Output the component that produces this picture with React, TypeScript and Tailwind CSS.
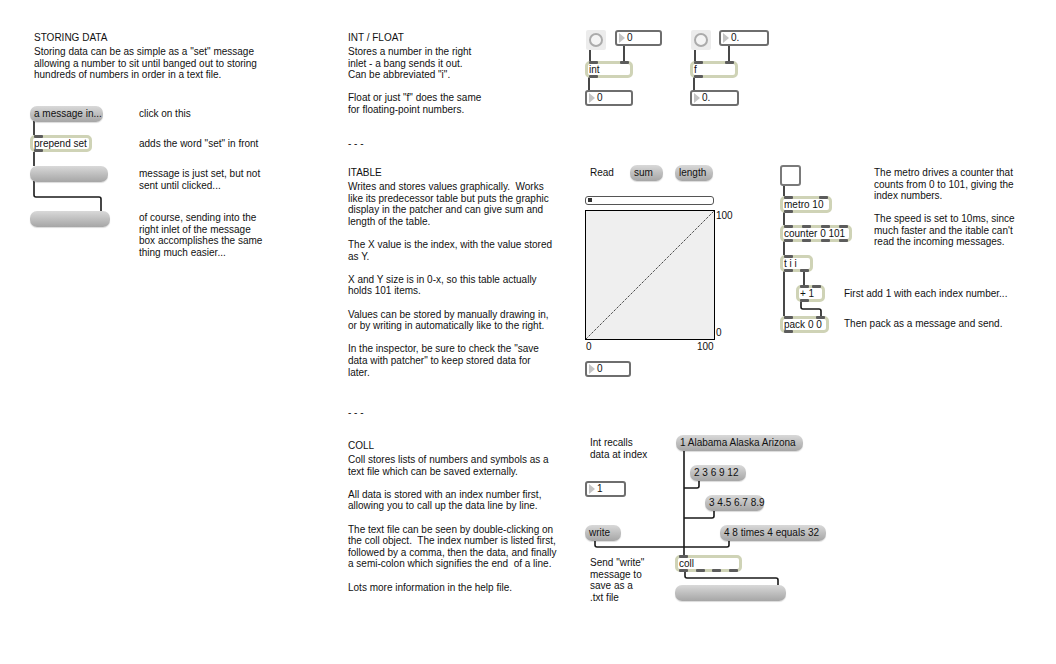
import React from "react";

type Box = { className: string; text?: string };

function Comment({ className, text }: Box) {
  return (
    <div className={`absolute whitespace-pre text-[10px] leading-[11.6px] text-[#111] ${className}`}>
      {text}
    </div>
  );
}

function Ports({ n, side }: { n: number; side: "top" | "bottom" }) {
  const pos = side === "top" ? "-top-[3px]" : "-bottom-[3px]";
  return (
    <div className={`absolute left-[1px] right-[1px] flex ${pos} ${n > 1 ? "justify-between" : "justify-start"}`}>
      {Array.from({ length: n }).map((_, i) => (
        <div key={i} className="h-[3px] w-[9px] rounded-[1px] bg-[#5c5c5c]" />
      ))}
    </div>
  );
}

function Obj({ className, text, ins, outs }: Box & { ins: number; outs: number }) {
  return (
    <div className={`absolute flex h-[17px] items-center rounded-[5px] border-[3px] border-[#cfd3b6] bg-white ${className}`}>
      <Ports n={ins} side="top" />
      <Ports n={outs} side="bottom" />
      <span className="whitespace-pre pl-[1px] text-[10px] leading-[11px] text-[#111]">{text}</span>
    </div>
  );
}

function Msg({ className, text }: Box) {
  return (
    <div
      className={`absolute flex h-[16px] items-center rounded-[7px] bg-gradient-to-b from-[#d9d9d9] via-[#bfbfbf] to-[#a6a6a6] pl-[4px] text-[10px] text-[#111] shadow-[0_1px_1px_rgba(0,0,0,0.15)] ${className}`}
    >
      <span className="whitespace-pre leading-[12px]">{text}</span>
    </div>
  );
}

function Num({ className, text }: Box) {
  return (
    <div className={`absolute flex h-[16px] items-center rounded-[3px] border-2 border-[#6e6e6e] bg-white ${className}`}>
      <span className="ml-[2px] h-0 w-0 border-y-[5px] border-l-[6px] border-y-transparent border-l-[#c4c4c4]" />
      <span className="ml-[2px] text-[10px] leading-[12px] text-[#111]">{text}</span>
    </div>
  );
}

function Bang({ className }: { className: string }) {
  return (
    <div className={`absolute flex h-[20px] w-[20px] items-center justify-center rounded-[2px] bg-[#ececec] ${className}`}>
      <div className="h-[14px] w-[14px] rounded-full border-2 border-[#ababab] bg-[#f4f4f4]" />
    </div>
  );
}

export default function App() {
  return (
    <div className="relative h-[664px] w-[1056px] overflow-hidden bg-white font-['Liberation_Sans',Arial,sans-serif]">
      {/* patch cords */}
      <svg className="absolute left-0 top-0" width="1056" height="664">
        <g fill="none" stroke="#1a1a1a" strokeWidth="1.6">
          <path d="M34 121 V135" />
          <path d="M34 152 V166" />
          <path d="M34 181 V195 Q34 197 36 197 H99 Q101 197 101 199 V211" />

          <path d="M590 50 V61" />
          <path d="M624 44 V61" />
          <path d="M589 77 V90" />
          <path d="M695 50 V61" />
          <path d="M729 44 V61" />
          <path d="M694 77 V90" />

          <path d="M784 186 V196" />
          <path d="M784 211 V225" />
          <path d="M784 241 V255" />
          <path d="M784 270 V316" />
          <path d="M804 270 V285" />
          <path d="M801 300 V307 Q801 309 803 309 H819 Q821 309 821 311 V316" />

          <path d="M684 451 V555" />
          <path d="M699 480 V486 Q699 488 697 488 H684" />
          <path d="M714 510 V516 Q714 518 712 518 H684" />
          <path d="M595 540 V545 Q595 547 597 547 H684" />
          <path d="M729 540 V545 Q729 547 727 547 H684" />
          <path d="M685 572 V576 Q685 578 687 578 H776 Q778 578 778 580 V585" />
        </g>
      </svg>

      {/* STORING DATA */}
      <Comment className="left-[34px] top-[32px]" text="STORING DATA" />
      <Comment
        className="left-[34px] top-[46px] text-[10.4px]"
        text={'Storing data can be as simple as a "set" message\nallowing a number to sit until banged out to storing\nhundreds of numbers in order in a text file.'}
      />
      <Msg className="left-[30px] top-[106px] w-[73px]" text="a message in..." />
      <Comment className="left-[139px] top-[108px]" text="click on this" />
      <Obj className="left-[30px] top-[135px] w-[62px]" text="prepend set" ins={1} outs={1} />
      <Comment className="left-[139px] top-[138px]" text={'adds the word "set" in front'} />
      <Msg className="left-[30px] top-[166px] w-[78px]" />
      <Comment className="left-[139px] top-[168px]" text={"message is just set, but not\nsent until clicked..."} />
      <Msg className="left-[30px] top-[211px] w-[80px]" />
      <Comment
        className="left-[139px] top-[212px]"
        text={"of course, sending into the\nright inlet of the message\nbox accomplishes the same\nthing much easier..."}
      />

      {/* INT / FLOAT */}
      <Comment className="left-[348px] top-[32px]" text="INT / FLOAT" />
      <Comment
        className="left-[348px] top-[46px]"
        text={'Stores a number in the right\ninlet - a bang sends it out.\nCan be abbreviated "i".\n\nFloat or just "f" does the same\nfor floating-point numbers.'}
      />
      <Comment className="left-[348px] top-[138px]" text="- - -" />

      <Bang className="left-[586px] top-[30px]" />
      <Num className="left-[615px] top-[30px] w-[47px]" text="0" />
      <Obj className="left-[585px] top-[61px] w-[48px]" text="int" ins={2} outs={1} />
      <Num className="left-[585px] top-[90px] w-[48px]" text="0" />

      <Bang className="left-[691px] top-[30px]" />
      <Num className="left-[719px] top-[30px] w-[50px]" text="0." />
      <Obj className="left-[690px] top-[61px] w-[48px]" text="f" ins={2} outs={1} />
      <Num className="left-[690px] top-[90px] w-[49px]" text="0." />

      {/* ITABLE */}
      <Comment className="left-[348px] top-[167px]" text="ITABLE" />
      <Comment
        className="left-[348px] top-[181px]"
        text={
          "Writes and stores values graphically.  Works\nlike its predecessor table but puts the graphic\ndisplay in the patcher and can give sum and\nlength of the table.\n\nThe X value is the index, with the value stored\nas Y.\n\nX and Y size is in 0-x, so this table actually\nholds 101 items.\n\nValues can be stored by manually drawing in,\nor by writing in automatically like to the right.\n\nIn the inspector, be sure to check the \"save\ndata with patcher\" to keep stored data for\nlater."
        }
      />
      <Comment className="left-[348px] top-[407px]" text="- - -" />

      <Comment className="left-[590px] top-[167px]" text="Read" />
      <Msg className="left-[630px] top-[165px] w-[33px]" text="sum" />
      <Msg className="left-[675px] top-[165px] w-[38px]" text="length" />
      <div className="absolute left-[585px] top-[196px] h-[9px] w-[129px] rounded-[3px] border-[1.5px] border-[#555] bg-white">
        <div className="ml-[2px] mt-[1px] h-[4px] w-[4px] bg-[#333]" />
      </div>
      <div className="absolute left-[585px] top-[210px] h-[130px] w-[130px] border border-black bg-[#efefef]">
        <svg className="absolute left-0 top-0" width="128" height="128">
          <line x1="0" y1="128" x2="128" y2="0" stroke="#000" strokeWidth="1" strokeDasharray="1 1.2" />
        </svg>
      </div>
      <Comment className="left-[716px] top-[210px]" text="100" />
      <Comment className="left-[716px] top-[327px]" text="0" />
      <Comment className="left-[586px] top-[341px]" text="0" />
      <Comment className="left-[697px] top-[341px]" text="100" />
      <Num className="left-[585px] top-[361px] w-[46px]" text="0" />

      {/* metro / counter */}
      <div className="absolute left-[780px] top-[165px] h-[21px] w-[21px] rounded-[3px] border-2 border-[#7a7a7a] bg-white" />
      <Obj className="left-[780px] top-[196px] w-[52px]" text="metro 10" ins={2} outs={1} />
      <Obj className="left-[780px] top-[225px] w-[72px]" text="counter 0 101" ins={4} outs={4} />
      <Obj className="left-[780px] top-[255px] w-[33px]" text="t i i" ins={1} outs={2} />
      <Obj className="left-[796px] top-[285px] w-[29px]" text="+ 1" ins={2} outs={1} />
      <Obj className="left-[780px] top-[316px] w-[49px]" text="pack 0 0" ins={2} outs={1} />
      <Comment
        className="left-[874px] top-[167px]"
        text={"The metro drives a counter that\ncounts from 0 to 101, giving the\nindex numbers."}
      />
      <Comment
        className="left-[874px] top-[213px]"
        text={"The speed is set to 10ms, since\nmuch faster and the itable can't\nread the incoming messages."}
      />
      <Comment className="left-[844px] top-[288px]" text="First add 1 with each index number..." />
      <Comment className="left-[844px] top-[318px]" text="Then pack as a message and send." />

      {/* COLL */}
      <Comment className="left-[348px] top-[440px]" text="COLL" />
      <Comment
        className="left-[348px] top-[454px]"
        text={
          "Coll stores lists of numbers and symbols as a\ntext file which can be saved externally.\n\nAll data is stored with an index number first,\nallowing you to call up the data line by line.\n\nThe text file can be seen by double-clicking on\nthe coll object.  The index number is listed first,\nfollowed by a comma, then the data, and finally\na semi-colon which signifies the end  of a line.\n\nLots more information in the help file."
        }
      />
      <Comment className="left-[590px] top-[437px]" text={"Int recalls\ndata at index"} />
      <Num className="left-[585px] top-[481px] w-[41px]" text="1" />
      <Msg className="left-[585px] top-[525px] w-[36px]" text="write" />
      <Comment className="left-[590px] top-[557px]" text={'Send "write"\nmessage to\nsave as a\n.txt file'} />

      <Msg className="left-[676px] top-[435px] w-[127px]" text="1 Alabama Alaska Arizona" />
      <Msg className="left-[690px] top-[465px] w-[56px]" text="2 3 6 9 12" />
      <Msg className="left-[705px] top-[495px] w-[59px]" text="3 4.5 6.7 8.9" />
      <Msg className="left-[720px] top-[525px] w-[106px]" text="4 8 times 4 equals 32" />
      <Obj className="left-[675px] top-[555px] w-[67px]" text="coll" ins={1} outs={4} />
      <Msg className="left-[675px] top-[585px] w-[111px]" />
    </div>
  );
}
